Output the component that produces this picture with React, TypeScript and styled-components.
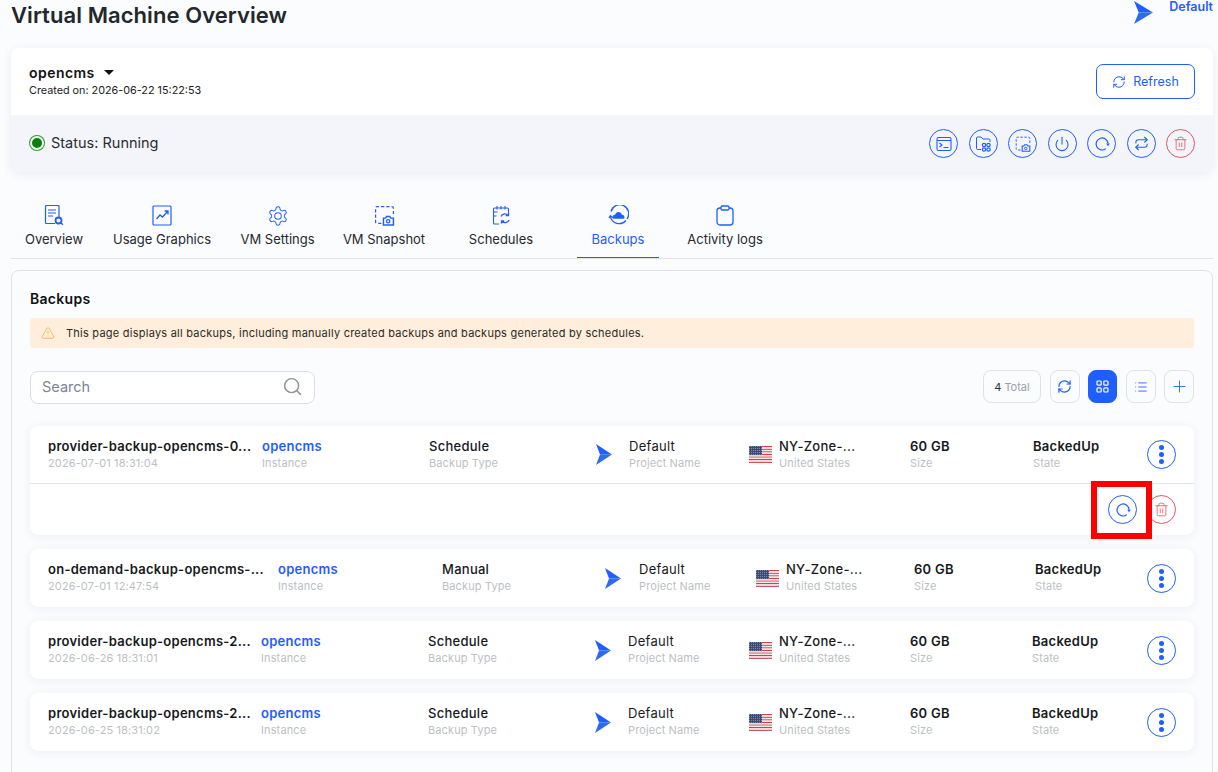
import styled, { createGlobalStyle } from "styled-components";
import { Plus, Power, Repeat, RefreshCw, Search as SearchGlyph, Trash2, TriangleAlert, List } from "lucide-react";

const BLUE = "#1f5eff";
const RED = "#e0565b";

const GlobalStyle = createGlobalStyle`
  html, body { margin: 0; padding: 0; background: #fbfcfe; overflow: hidden; }
  body { font-family: "Inter", "Open Sans", sans-serif; color: #212529; }
  * { box-sizing: border-box; }
`;

const Page = styled.div`
  width: 1218px;
  height: 772px;
  overflow: hidden;
  padding: 0 5px 0 11px;
`;

/* header */
const Header = styled.header`
  display: flex;
  justify-content: space-between;
  height: 48px;
`;
const Title = styled.h1`
  margin: 0;
  padding-top: 2px;
  font-size: 22px;
  line-height: 27px;
  font-weight: 600;
  letter-spacing: 0.07px;
  color: #24272b;
`;
const ProjectBadge = styled.div`
  display: flex;
  align-items: flex-start;
  gap: 16px;
  padding-top: 2px;
  font-size: 12.5px;
  line-height: 9px;
  font-weight: 600;
  color: ${BLUE};
  svg { margin-top: -1px; }
`;

/* summary card */
const SummaryCard = styled.section`
  border-radius: 8px;
  background: #fff;
  box-shadow: 0 2px 10px rgba(40, 50, 90, 0.08);
  overflow: hidden;
`;
const SummaryTop = styled.div`
  height: 67px;
  padding: 15px 18px 0;
  display: flex;
  justify-content: space-between;
`;
const VmName = styled.div`
  display: flex;
  align-items: center;
  gap: 9px;
  height: 18px;
  font-size: 14px;
  font-weight: 600;
  letter-spacing: 0.45px;
  color: #111;
`;
const Caret = styled.span`
  width: 0;
  height: 0;
  border-left: 5px solid transparent;
  border-right: 5px solid transparent;
  border-top: 5px solid #111;
`;
const CreatedOn = styled.div`
  margin-top: 2px;
  font-size: 10.8px;
  line-height: 16px;
  color: #222;
`;
const RefreshButton = styled.button`
  margin-top: 1px;
  width: 99px;
  height: 35px;
  border: 1px solid ${BLUE};
  border-radius: 7px;
  background: #fff;
  color: ${BLUE};
  font: 400 12.5px "Inter", sans-serif;
  display: flex;
  align-items: center;
  justify-content: center;
  gap: 7px;
`;
const SummaryBottom = styled.div`
  height: 57px;
  padding: 0 18px;
  background: #f4f5fa;
  display: flex;
  justify-content: space-between;
  align-items: center;
`;
const Status = styled.div`
  display: flex;
  align-items: center;
  gap: 7px;
  margin-top: -2px;
  font-size: 14.5px;
  color: #2a2d31;
`;
const StatusDot = styled.span`
  width: 14px;
  height: 14px;
  border-radius: 50%;
  background: #078207;
  border: 2px solid #f4f5fa;
  box-shadow: 0 0 0 1px #2e9b2e;
  margin-left: 1px;
`;
const ActionGroup = styled.div`
  display: flex;
  gap: 10.5px;
`;
const CircleButton = styled.button<{ $danger?: boolean }>`
  width: 29px;
  height: 29px;
  flex: none;
  border-radius: 50%;
  padding: 0;
  background: transparent;
  border: 1px solid ${({ $danger }) => ($danger ? RED : BLUE)};
  color: ${({ $danger }) => ($danger ? RED : BLUE)};
  display: flex;
  align-items: center;
  justify-content: center;
`;

/* tabs */
const Tabs = styled.nav`
  display: flex;
  margin-top: 23px;
  height: 64px;
  border-bottom: 1px solid #e1e3e8;
`;
const Tab = styled.div<{ $width: number; $active?: boolean; $offset?: number }>`
  width: ${({ $width }) => $width}px;
  margin-left: ${({ $offset }) => $offset ?? 0}px;
  height: 63px;
  padding-top: 10px;
  display: flex;
  flex-direction: column;
  align-items: center;
  gap: 5px;
  font-size: 13px;
  line-height: 16px;
  color: ${({ $active }) => ($active ? BLUE : "#26292d")};
  border-bottom: 1px solid ${({ $active }) => ($active ? BLUE : "transparent")};
`;
const TabIcon = styled.div`
  height: 21px;
  display: flex;
  align-items: center;
  color: ${BLUE};
`;

/* backups panel */
const Panel = styled.section`
  margin-top: 11px;
  padding: 18px 18px;
  height: 560px;
  border: 1px solid #dfe1e6;
  border-radius: 8px;
`;
const PanelTitle = styled.h2`
  margin: 0 0 10px;
  font-size: 14px;
  line-height: 19px;
  font-weight: 600;
  letter-spacing: 0.3px;
  color: #111;
`;
const Notice = styled.div`
  height: 30px;
  padding: 0 11px;
  display: flex;
  align-items: center;
  gap: 11px;
  border-radius: 3px;
  background: #feeedb;
  color: #2d2a26;
  font-size: 11px;
  letter-spacing: 0.24px;
  svg { color: #f1b44c; }
`;
const Toolbar = styled.div`
  margin-top: 22px;
  display: flex;
  justify-content: space-between;
  align-items: flex-start;
`;
const SearchBox = styled.div`
  margin-top: 1px;
  width: 285px;
  height: 33px;
  padding: 0 11px 2px;
  border: 1px solid #dcdee3;
  border-radius: 8px;
  background: #fff;
  display: flex;
  justify-content: space-between;
  align-items: center;
  color: #7d8596;
  font-size: 14.5px;
  svg { color: #8f9297; }
`;
const ToolGroup = styled.div`
  display: flex;
  gap: 8.5px;
`;
const ToolButton = styled.div<{ $active?: boolean; $width?: number }>`
  width: ${({ $width }) => $width ?? 30}px;
  height: 33px;
  border-radius: 8px;
  border: 1px solid ${({ $active }) => ($active ? BLUE : "#dfe1e6")};
  background: ${({ $active }) => ($active ? BLUE : "transparent")};
  color: ${({ $active }) => ($active ? "#fff" : BLUE)};
  display: flex;
  align-items: center;
  justify-content: center;
  gap: 3px;
  font-size: 11px;
`;
const TotalCount = styled.span`
  color: #2a2d31;
`;
const TotalLabel = styled.span`
  color: #9b9ea4;
`;

const RowList = styled.div`
  margin-top: 22px;
  display: flex;
  flex-direction: column;
  gap: 14px;
`;
const RowCard = styled.article`
  border-radius: 8px;
  background: #fff;
  box-shadow: 0 1px 10px rgba(40, 50, 90, 0.07);
`;
const RowMain = styled.div<{ $columns: string; $open?: boolean }>`
  height: ${({ $open }) => ($open ? 57 : 58)}px;
  padding: 0 18px;
  display: grid;
  grid-template-columns: ${({ $columns }) => $columns} 1fr;
  align-items: center;
`;
const Cell = styled.div`
  display: flex;
  align-items: center;
  min-width: 0;
`;
const CellText = styled.div`
  display: flex;
  flex-direction: column;
  gap: 1px;
  padding-bottom: 2px;
`;
const Primary = styled.div<{ $link?: boolean; $weight?: number }>`
  font-size: 13px;
  line-height: 18px;
  letter-spacing: 0.27px;
  font-weight: ${({ $weight }) => $weight ?? 500};
  color: ${({ $link }) => ($link ? BLUE : "#17191c")};
  white-space: nowrap;
`;
const Secondary = styled.div`
  font-size: 11px;
  line-height: 15px;
  letter-spacing: 0.12px;
  color: #bcbfc5;
  white-space: nowrap;
`;
const CellIcon = styled.div<{ $width: number }>`
  width: ${({ $width }) => $width}px;
  flex: none;
  display: flex;
  align-items: center;
`;
const MoreCell = styled.div`
  display: flex;
  justify-content: flex-end;
`;
const MoreDots = styled.span`
  display: flex;
  flex-direction: column;
  gap: 2px;
  i {
    width: 5px;
    height: 5px;
    border-radius: 50%;
    background: ${BLUE};
  }
`;
const RowActions = styled.div`
  height: 52px;
  padding: 0 18px;
  border-top: 1px solid #e1e3e8;
  display: flex;
  justify-content: flex-end;
  align-items: center;
  gap: 10px;
`;
const Highlighted = styled.div`
  position: relative;
  display: flex;
`;
const HighlightBox = styled.span`
  position: absolute;
  left: -17px;
  top: -14px;
  width: 61px;
  height: 58px;
  border: 6px solid #ff0000;
  pointer-events: none;
`;

/* drawings */
const PlaneLogo = ({ width, height }: { width: number; height: number }) => (
  <svg width={width} height={height} viewBox="0 0 16 21" preserveAspectRatio="none">
    <path d="M0 0 L16 10.5 L4 10.5 Z" fill="#1f5eff" />
    <path d="M0 21 L16 10.5 L4 10.5 Z" fill="#2f6be8" />
  </svg>
);

const UsFlag = () => (
  <svg width="23" height="17" viewBox="0 0 23 17">
    <defs>
      <pattern id="flag-stars" width="2" height="2" patternUnits="userSpaceOnUse">
        <rect width="1" height="1" fill="#7f89a8" />
      </pattern>
    </defs>
    {Array.from({ length: 7 }).map((_, i) => (
      <rect key={i} x="0" y={i * 2.6} width="23" height="1.3" fill="#c8434f" />
    ))}
    {Array.from({ length: 6 }).map((_, i) => (
      <rect key={i} x="0" y={1.3 + i * 2.6} width="23" height="1.3" fill="#f3e6e6" />
    ))}
    <rect x="0" y="0" width="13" height="9.1" fill="#3b4a78" />
    <rect x="0" y="0" width="13" height="9.1" fill="url(#flag-stars)" />
  </svg>
);

const ConsoleIcon = () => (
  <svg width="16" height="16" viewBox="0 0 16 16" fill="none" stroke="currentColor" strokeWidth="1.1">
    <rect x="1" y="1.5" width="14" height="13" rx="1.5" />
    <path d="M1 4.5h14M3.5 7l2.5 2-2.5 2M7.5 11.5h5" />
  </svg>
);
const FolderGridIcon = () => (
  <svg width="17" height="17" viewBox="0 0 17 17" fill="none" stroke="currentColor" strokeWidth="1">
    <path d="M6 14.5H2.5a1 1 0 0 1-1-1V3a1 1 0 0 1 1-1h3.5l2 2h6a1 1 0 0 1 1 1v2" />
    <circle cx="9" cy="10" r="1.7" strokeWidth="1.2" />
    <circle cx="13.5" cy="10" r="1.7" strokeWidth="1.2" />
    <circle cx="9" cy="14.5" r="1.7" strokeWidth="1.2" />
    <circle cx="13.5" cy="14.5" r="1.7" strokeWidth="1.2" />
  </svg>
);
const SnapshotIcon = ({ size = 16 }: { size?: number }) => (
  <svg width={size} height={size} viewBox="0 0 20 20" fill="none" stroke="currentColor" strokeWidth="1.2">
    <path d="M7 17.5H3a1.5 1.5 0 0 1-1.5-1.5V3A1.5 1.5 0 0 1 3 1.5h14A1.5 1.5 0 0 1 18.5 3v6" strokeDasharray="3 2" />
    <path d="M9 12.5h2l1-1.5h3l1 1.5h2.5v6.5H9z" strokeWidth="1.4" />
    <circle cx="13.5" cy="15.5" r="1.6" />
  </svg>
);
const ReloadIcon = () => (
  <svg width="16" height="16" viewBox="0 0 16 16" fill="none" stroke="currentColor" strokeWidth="1.2">
    <path d="M11.86 12.6A6 6 0 1 1 14 7.5" />
    <path d="M12.2 7.6h3.6L14 10.2z" fill="currentColor" stroke="none" />
  </svg>
);
const GridIcon = () => (
  <svg width="13" height="13" viewBox="0 0 13 13" fill="none" stroke="currentColor" strokeWidth="1.2">
    <rect x="1" y="1" width="4.2" height="4.2" rx="1" />
    <rect x="7.8" y="1" width="4.2" height="4.2" rx="1" />
    <rect x="1" y="7.8" width="4.2" height="4.2" rx="1" />
    <rect x="7.8" y="7.8" width="4.2" height="4.2" rx="1" />
  </svg>
);
const OverviewIcon = () => (
  <svg width="20" height="21" viewBox="0 0 20 21" fill="none" stroke="currentColor" strokeWidth="1.2">
    <path d="M11 18.5H2.5a1 1 0 0 1-1-1V1.5a1 1 0 0 1 1-1H14a1 1 0 0 1 1 1V12" />
    <path d="M4 5h8M4 8h8M4 11h5" />
    <circle cx="14.5" cy="15.5" r="3" strokeWidth="1.8" />
    <path d="M17 18l2 1.8" strokeWidth="1.4" />
  </svg>
);
const ChartIcon = () => (
  <svg width="20" height="21" viewBox="0 0 20 21" fill="none" stroke="currentColor" strokeWidth="1.2">
    <rect x="1" y="1" width="18" height="19" rx="1" />
    <path d="M4.5 14l3.5-4 2.5 2 5-5.5M12.5 6h3.5v3.5" strokeWidth="1.3" />
  </svg>
);
const GearIcon = () => (
  <svg width="22" height="22" viewBox="0 0 24 24" fill="none" stroke="currentColor" strokeWidth="1.1">
    <path d="M12.22 2h-.44a2 2 0 0 0-2 2v.18a2 2 0 0 1-1 1.73l-.43.25a2 2 0 0 1-2 0l-.15-.08a2 2 0 0 0-2.73.73l-.22.38a2 2 0 0 0 .73 2.73l.15.1a2 2 0 0 1 1 1.72v.51a2 2 0 0 1-1 1.74l-.15.09a2 2 0 0 0-.73 2.73l.22.38a2 2 0 0 0 2.73.73l.15-.08a2 2 0 0 1 2 0l.43.25a2 2 0 0 1 1 1.73V20a2 2 0 0 0 2 2h.44a2 2 0 0 0 2-2v-.18a2 2 0 0 1 1-1.73l.43-.25a2 2 0 0 1 2 0l.15.08a2 2 0 0 0 2.73-.73l.22-.39a2 2 0 0 0-.73-2.73l-.15-.08a2 2 0 0 1-1-1.74v-.5a2 2 0 0 1 1-1.74l.15-.09a2 2 0 0 0 .73-2.73l-.22-.38a2 2 0 0 0-2.73-.73l-.15.08a2 2 0 0 1-2 0l-.43-.25a2 2 0 0 1-1-1.73V4a2 2 0 0 0-2-2z" />
    <circle cx="12" cy="12" r="3.6" />
  </svg>
);
const ScheduleIcon = () => (
  <svg width="19" height="21" viewBox="0 0 19 21" fill="none" stroke="currentColor" strokeWidth="1.1">
    <path d="M7 19H2.5a1 1 0 0 1-1-1V4a1 1 0 0 1 1-1h13a1 1 0 0 1 1 1v5" />
    <path d="M5 1v3.5M9 1v3.5M13 1v3.5M1.5 7h4M1.5 11h3" />
    <path d="M9 11.5a4 4 0 0 1 7-1M16.5 8v2.7h-2.7M17 15a4 4 0 0 1-7 1M9.5 18.5v-2.7h2.7" strokeWidth="1.3" />
  </svg>
);
const BackupIcon = () => (
  <svg width="21" height="21" viewBox="0 0 21 21" fill="none" stroke="currentColor" strokeWidth="1.3">
    <path d="M3 6.5A9 9 0 1 1 19 14M18 15.5A9 9 0 0 1 2.3 11" />
    <path d="M1 13l1.3-2.3L4.5 12.5" />
    <path d="M4.5 12.5c0-1.6 1-2.7 2.5-2.7.5-1.6 1.9-2.8 3.5-2.8s3 1.2 3.5 2.8c1.5 0 2.5 1.1 2.5 2.7 0 .8-.5 1.2-1.2 1.2H5.7c-.7 0-1.2-.4-1.2-1.2z" fill="currentColor" stroke="none" />
  </svg>
);
const ClipboardIcon = () => (
  <svg width="18" height="21" viewBox="0 0 18 21" fill="none" stroke="currentColor" strokeWidth="1.3">
    <rect x="1" y="3" width="16" height="17" rx="3" />
    <rect x="5" y="1" width="8" height="4" rx="1.2" fill="#fbfcfe" />
  </svg>
);

const tabs = [
  { label: "Overview", width: 86, icon: <OverviewIcon /> },
  { label: "Usage Graphics", width: 130, icon: <ChartIcon /> },
  { label: "VM Settings", width: 101, icon: <GearIcon /> },
  { label: "VM Snapshot", width: 112, icon: <SnapshotIcon size={21} /> },
  { label: "Schedules", width: 122, icon: <ScheduleIcon /> },
  { label: "Backups", width: 82, offset: 15, active: true, icon: <BackupIcon /> },
  { label: "Activity logs", width: 132, icon: <ClipboardIcon /> },
];

const backups = [
  { name: "provider-backup-opencms-0...", date: "2026-07-01 18:31:04", type: "Schedule", columns: "214px 167px 167px 153px 161px 123px 114px", iconWidth: 33, open: true },
  { name: "on-demand-backup-opencms-...", date: "2026-07-01 12:47:54", type: "Manual", columns: "230px 164px 163px 151px 158px 121px 112px", iconWidth: 34 },
  { name: "provider-backup-opencms-2...", date: "2026-06-26 18:31:01", type: "Schedule", columns: "213px 167px 167px 154px 161px 122px 115px", iconWidth: 33 },
  { name: "provider-backup-opencms-2...", date: "2026-06-25 18:31:02", type: "Schedule", columns: "213px 167px 167px 154px 161px 122px 115px", iconWidth: 33 },
];

const App = () => {
  return (
    <Page>
      <GlobalStyle />
      <Header>
        <Title>Virtual Machine Overview</Title>
        <ProjectBadge>
          <PlaneLogo width={19} height={23} />
          <span>Default</span>
        </ProjectBadge>
      </Header>

      <SummaryCard>
        <SummaryTop>
          <div>
            <VmName>opencms <Caret /></VmName>
            <CreatedOn>Created on: 2026-06-22 15:22:53</CreatedOn>
          </div>
          <RefreshButton><RefreshCw size={14} strokeWidth={1.7} /> Refresh</RefreshButton>
        </SummaryTop>
        <SummaryBottom>
          <Status><StatusDot /> Status: Running</Status>
          <ActionGroup>
            <CircleButton><ConsoleIcon /></CircleButton>
            <CircleButton><FolderGridIcon /></CircleButton>
            <CircleButton><SnapshotIcon /></CircleButton>
            <CircleButton><Power size={16} strokeWidth={1.6} /></CircleButton>
            <CircleButton><ReloadIcon /></CircleButton>
            <CircleButton><Repeat size={15} strokeWidth={1.7} /></CircleButton>
            <CircleButton $danger><Trash2 size={15} strokeWidth={1.3} /></CircleButton>
          </ActionGroup>
        </SummaryBottom>
      </SummaryCard>

      <Tabs>
        {tabs.map((tab) => (
          <Tab key={tab.label} $width={tab.width} $active={tab.active} $offset={tab.offset}>
            <TabIcon>{tab.icon}</TabIcon>
            <span>{tab.label}</span>
          </Tab>
        ))}
      </Tabs>

      <Panel>
        <PanelTitle>Backups</PanelTitle>
        <Notice>
          <TriangleAlert size={14} strokeWidth={1.5} />
          This page displays all backups, including manually created backups and backups generated by schedules.
        </Notice>
        <Toolbar>
          <SearchBox>
            Search
            <SearchGlyph size={21} strokeWidth={1.7} />
          </SearchBox>
          <ToolGroup>
            <ToolButton $width={58}><TotalCount>4</TotalCount> <TotalLabel>Total</TotalLabel></ToolButton>
            <ToolButton><RefreshCw size={15} strokeWidth={1.9} /></ToolButton>
            <ToolButton $active $width={29}><GridIcon /></ToolButton>
            <ToolButton><List size={14} strokeWidth={1.5} /></ToolButton>
            <ToolButton><Plus size={19} strokeWidth={1.1} /></ToolButton>
          </ToolGroup>
        </Toolbar>

        <RowList>
          {backups.map((row) => (
            <RowCard key={row.date}>
              <RowMain $columns={row.columns} $open={row.open}>
                <Cell>
                  <CellText>
                    <Primary $weight={600}>{row.name}</Primary>
                    <Secondary>{row.date}</Secondary>
                  </CellText>
                </Cell>
                <Cell>
                  <CellText>
                    <Primary $link $weight={600}>opencms</Primary>
                    <Secondary>Instance</Secondary>
                  </CellText>
                </Cell>
                <Cell>
                  <CellText>
                    <Primary>{row.type}</Primary>
                    <Secondary>Backup Type</Secondary>
                  </CellText>
                </Cell>
                <Cell>
                  <CellIcon $width={row.iconWidth}><PlaneLogo width={16} height={21} /></CellIcon>
                  <CellText>
                    <Primary $weight={400}>Default</Primary>
                    <Secondary>Project Name</Secondary>
                  </CellText>
                </Cell>
                <Cell>
                  <CellIcon $width={30}><UsFlag /></CellIcon>
                  <CellText>
                    <Primary>NY-Zone-...</Primary>
                    <Secondary>United States</Secondary>
                  </CellText>
                </Cell>
                <Cell>
                  <CellText>
                    <Primary $weight={600}>60 GB</Primary>
                    <Secondary>Size</Secondary>
                  </CellText>
                </Cell>
                <Cell>
                  <CellText>
                    <Primary $weight={600}>BackedUp</Primary>
                    <Secondary>State</Secondary>
                  </CellText>
                </Cell>
                <MoreCell>
                  <CircleButton>
                    <MoreDots><i /><i /><i /></MoreDots>
                  </CircleButton>
                </MoreCell>
              </RowMain>
              {row.open && (
                <RowActions>
                  <Highlighted>
                    <CircleButton><ReloadIcon /></CircleButton>
                    <HighlightBox />
                  </Highlighted>
                  <CircleButton $danger><Trash2 size={15} strokeWidth={1.3} /></CircleButton>
                </RowActions>
              )}
            </RowCard>
          ))}
        </RowList>
      </Panel>
    </Page>
  );
};

export default App;
